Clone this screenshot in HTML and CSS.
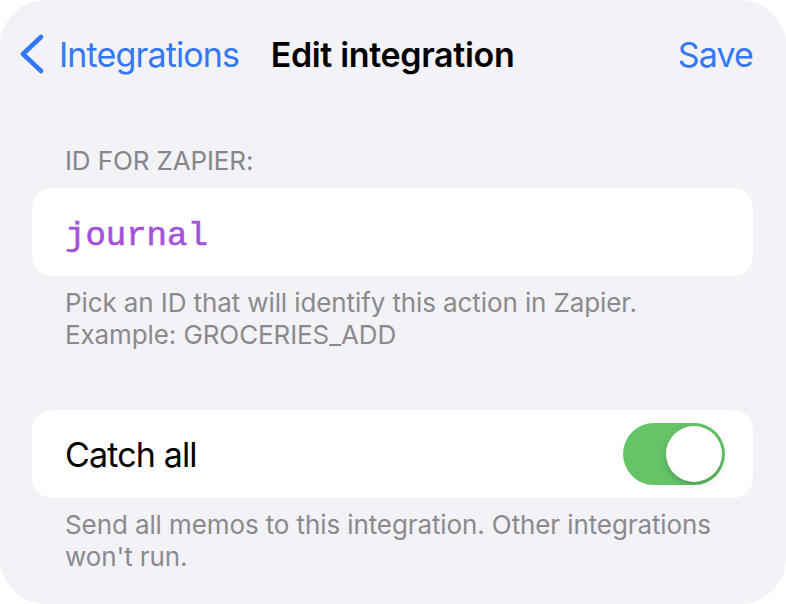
FILE: index.html
```html
<!DOCTYPE html>
<html>
<head>
<meta charset="utf-8">
<link rel="stylesheet" href="styles.css">
</head>
<body>
<div class="screen">
  <header class="nav">
    <div class="nav-left">
      <svg class="chevron" width="26" height="40" viewBox="0 0 26 40">
        <polyline points="22,3 4,20 22,37" fill="none" stroke="#3478f6" stroke-width="4.6" stroke-linecap="round" stroke-linejoin="round"/>
      </svg>
      <span class="link">Integrations</span>
    </div>
    <div class="nav-title">Edit integration</div>
    <div class="nav-right"><span class="link">Save</span></div>
  </header>

  <section class="group group-first">
    <div class="group-header">ID FOR ZAPIER:</div>
    <div class="card">
      <span class="mono">journal</span>
    </div>
    <div class="group-footer">Pick an ID that will identify this action in Zapier.<br>Example: GROCERIES_ADD</div>
  </section>

  <section class="group group-second">
    <div class="card card-row">
      <span class="row-label">Catch all</span>
      <span class="toggle"><span class="knob"></span></span>
    </div>
    <div class="group-footer">Send all memos to this integration. Other integrations won't run.</div>
  </section>
</div>
</body>
</html>
```

FILE: styles.css
```css
html, body {
  margin: 0;
  padding: 0;
  background: #ffffff;
}

.screen {
  width: 786px;
  height: 604px;
  background: #f2f2f7;
  border-radius: 46px;
  overflow: hidden;
  font-family: Inter, "Liberation Sans", sans-serif;
  box-sizing: border-box;
  padding: 0 33px 0 32px;
}

.nav {
  display: grid;
  grid-template-columns: 1fr auto 1fr;
  align-items: center;
  height: 108px;
}

.nav-left {
  display: flex;
  align-items: center;
  gap: 14px;
  margin-left: -13px;
}

.chevron {
  display: block;
}

.link {
  color: #3478f6;
  font-size: 34px;
  line-height: 41px;
  letter-spacing: -0.025em;
}

.nav-title {
  font-size: 34px;
  line-height: 41px;
  font-weight: 600;
  color: #000;
  letter-spacing: -0.01em;
}

.nav-right {
  display: flex;
  justify-content: flex-end;
}

.group-first {
  margin-top: 37px;
}

.group-second {
  margin-top: 59px;
}

.group-header {
  padding-left: 33px;
  font-size: 26px;
  line-height: 32px;
  color: #86868b;
  margin-bottom: 11px;
  letter-spacing: -0.005em;
}

.card {
  background: #ffffff;
  border-radius: 20px;
  height: 88px;
  display: flex;
  align-items: center;
  padding: 0 28px 0 33px;
  box-sizing: border-box;
}

.mono {
  font-family: "Liberation Mono", "DejaVu Sans Mono", monospace;
  font-size: 34px;
  line-height: 40px;
  color: #a452da;
  padding-top: 7px;
  -webkit-text-stroke: 0.6px #a452da;
}

.group-footer {
  padding-left: 33px;
  padding-right: 20px;
  margin-top: 11px;
  font-size: 26px;
  line-height: 32px;
  color: #8a8a8e;
  letter-spacing: -0.004em;
}

.card-row {
  justify-content: space-between;
}

.row-label {
  font-size: 34px;
  line-height: 41px;
  color: #000;
  letter-spacing: -0.025em;
}

.toggle {
  width: 102px;
  height: 62px;
  border-radius: 31px;
  background: #65c466;
  display: flex;
  align-items: center;
  justify-content: flex-end;
  padding-right: 3px;
  box-sizing: border-box;
}

.knob {
  width: 56px;
  height: 56px;
  border-radius: 50%;
  background: #ffffff;
  box-shadow: 0 3px 8px rgba(0, 0, 0, 0.15), 0 3px 1px rgba(0, 0, 0, 0.06);
}
```
